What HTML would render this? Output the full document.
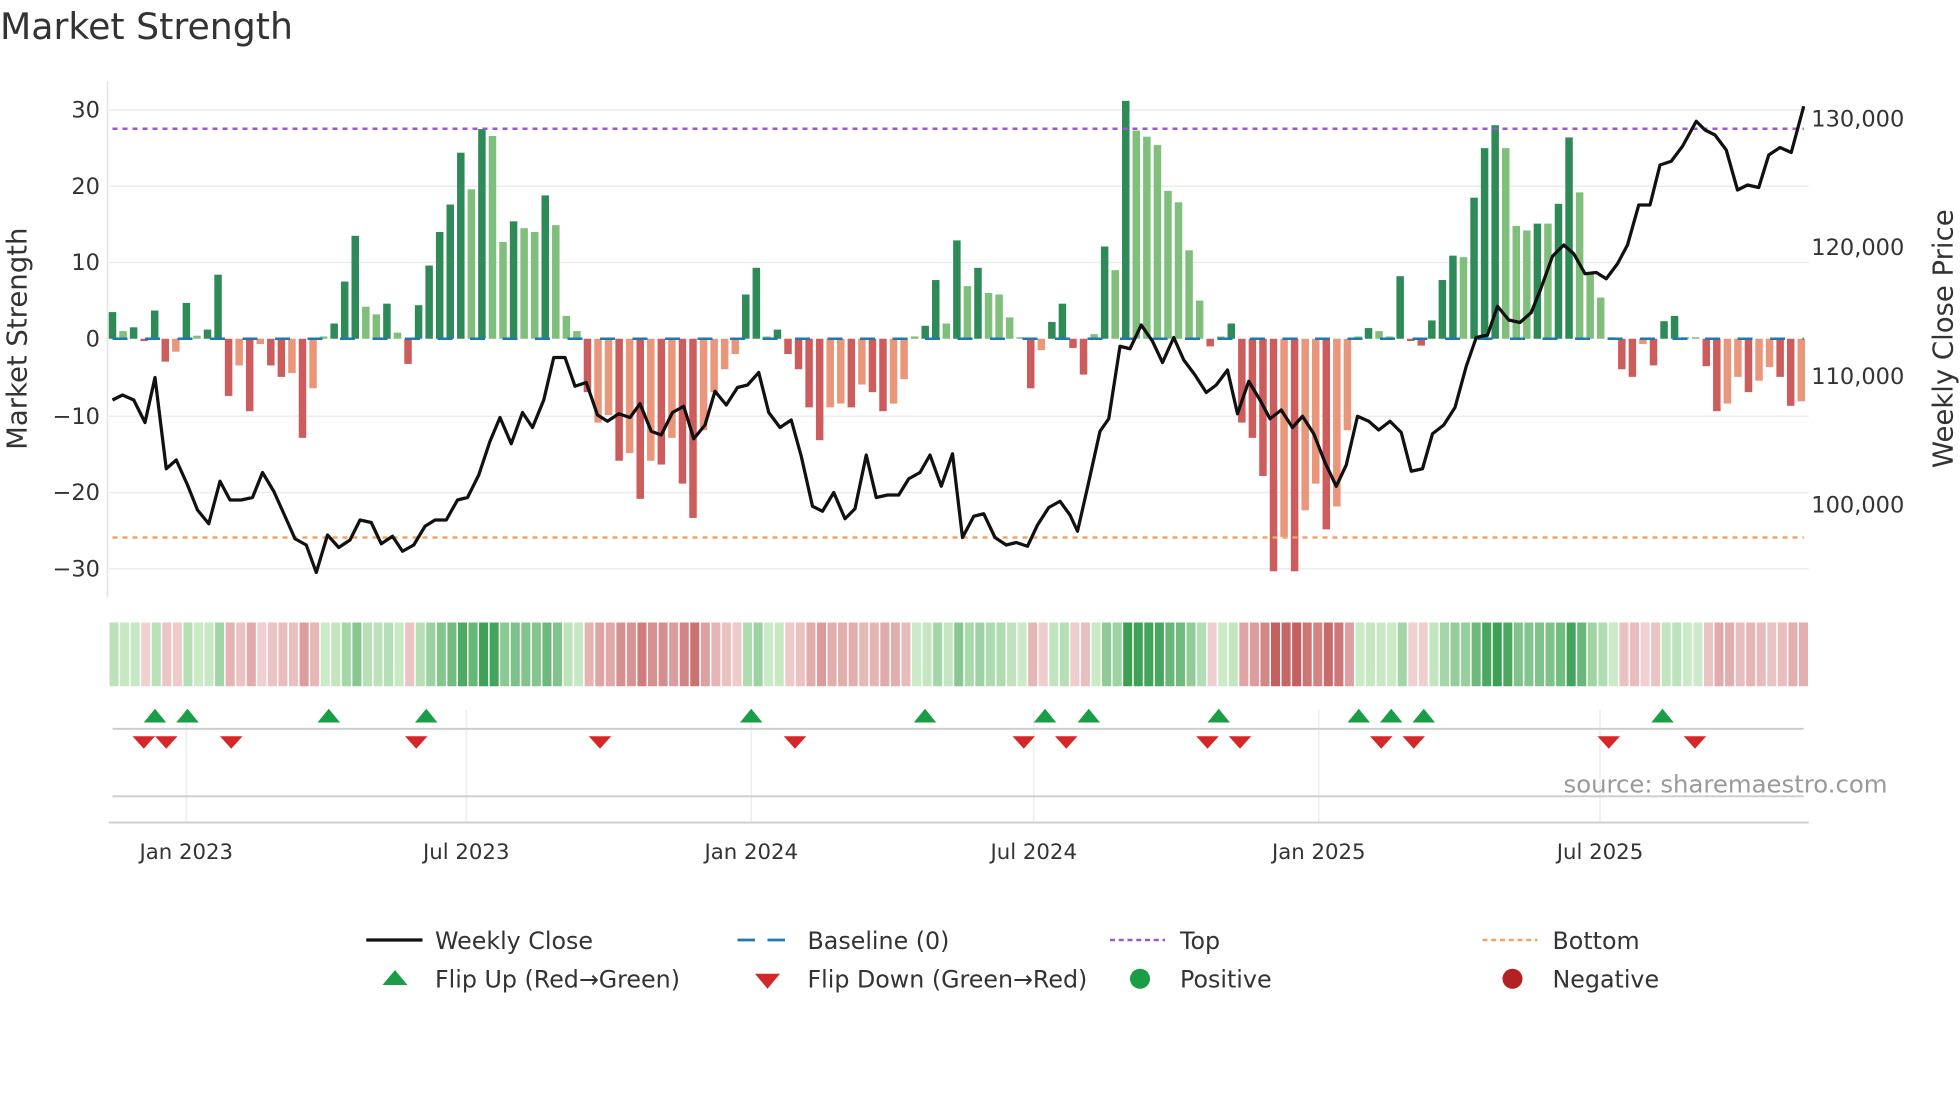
<!DOCTYPE html>
<html><head><meta charset="utf-8"><style>
html,body{margin:0;padding:0;background:#fff;}
svg{display:block;font-family:"DejaVu Sans","Liberation Sans",sans-serif;}
</style></head><body>
<svg id="s" width="1960" height="1102" viewBox="0 0 1568 881.6" xmlns="http://www.w3.org/2000/svg">
<rect width="1568" height="882" fill="#fff"/>
<text x="0" y="31" font-size="29" fill="#333">Market Strength</text>
<g id="grid"></g>
<g id="bars"></g>
<g id="strip"></g>
<g id="marks"></g>
<line x1="90" y1="103" x2="1443" y2="103" stroke="#9b59d0" stroke-width="2" stroke-dasharray="4,4"/>
<line x1="90" y1="430" x2="1443" y2="430" stroke="#f4a261" stroke-width="2" stroke-dasharray="4,4"/>
<polyline id="price" fill="none" stroke="#111" stroke-width="2.6" stroke-linejoin="round"/>
<g font-size="18" fill="#333" text-anchor="end">
<text x="80" y="94">30</text><text x="80" y="155">20</text><text x="80" y="216">10</text><text x="80" y="277">0</text>
<text x="80" y="339">−10</text><text x="80" y="400">−20</text><text x="80" y="461">−30</text>
</g>
<g font-size="18" fill="#333">
<text x="1449" y="101">130,000</text><text x="1449" y="204">120,000</text><text x="1449" y="307">110,000</text><text x="1449" y="410">100,000</text>
</g>
<text transform="translate(21,271) rotate(-90)" font-size="22" fill="#333" text-anchor="middle">Market Strength</text>
<text transform="translate(1562,271) rotate(-90)" font-size="22" fill="#333" text-anchor="middle">Weekly Close Price</text>
<line x1="90" y1="583" x2="1443" y2="583" stroke="#ccc" stroke-width="1.5"/>
<line x1="90" y1="637" x2="1443" y2="637" stroke="#ccc" stroke-width="1.5"/>
<line x1="87" y1="658" x2="1447" y2="658" stroke="#ccc" stroke-width="1.5"/>
<text x="1510" y="634" font-size="19.5" fill="#999" text-anchor="end">source: sharemaestro.com</text>
<g font-size="17" fill="#333" text-anchor="middle">
<text x="149" y="687">Jan 2023</text><text x="373" y="687">Jul 2023</text><text x="601" y="687">Jan 2024</text>
<text x="827" y="687">Jul 2024</text><text x="1055" y="687">Jan 2025</text><text x="1280" y="687">Jul 2025</text>
</g>
<g font-size="19" fill="#333">
<line x1="293" y1="752" x2="338" y2="752" stroke="#111" stroke-width="2.6"/><text x="348" y="759">Weekly Close</text>
<line x1="590" y1="752" x2="634" y2="752" stroke="#1f77b4" stroke-width="2.2" stroke-dasharray="14,10"/><text x="646" y="759">Baseline (0)</text>
<line x1="888" y1="752" x2="932" y2="752" stroke="#9b59d0" stroke-width="2" stroke-dasharray="4,3"/><text x="944" y="759">Top</text>
<line x1="1186" y1="752" x2="1230" y2="752" stroke="#f4a261" stroke-width="2" stroke-dasharray="4,3"/><text x="1242" y="759">Bottom</text>
<polygon points="306,788 326,788 316,776" fill="#1a9e45"/><text x="348" y="790">Flip Up (Red→Green)</text>
<polygon points="604,779 624,779 614,791" fill="#d62728"/><text x="646" y="790">Flip Down (Green→Red)</text>
<circle cx="912" cy="783" r="8" fill="#1a9e45"/><text x="944" y="790">Positive</text>
<circle cx="1210" cy="783" r="8" fill="#b22222"/><text x="1242" y="790">Negative</text>
</g>
</svg>
<script>
var NS="http://www.w3.org/2000/svg";
function el(p,t,a){var e=document.createElementNS(NS,t);for(var k in a)e.setAttribute(k,a[k]);p.appendChild(e);return e;}
var D="3.5d 1l 1.5d -0.3r 3.7d -3r -1.7s 4.7d 0.4l 1.2d 8.4d -7.5r -3.5s -9.5r -0.7s -3.5r -5r -4.5s -13r -6.5s 0.3l 2d 7.5d 13.5d 4.2l 3.2l 4.6d 0.8l -3.3r 4.4d 9.6d 14d 17.6d 24.4d 19.6l 27.5d 26.6l 12.7l 15.4d 14.5l 14l 18.8d 14.9l 3l 1l -7r -11s -10s -16r -15s -21r -16s -16.5r -13s -19r -23.5r -12s -7s -4s -2s 5.8d 9.3d 0.3l 1.2d -2r -4r -9r -13.3r -9s -8.5s -9r -6s -7r -9.5r -8.5s -5.3s 0.3l 1.7d 7.7d 2l 12.9d 6.9l 9.3d 6l 5.8l 2.8l 0.2l -6.5r -1.5s 2.2d 4.6d -1.2r -4.7r 0.6l 12.1d 9l 31.2d 27.3l 26.5l 25.4l 19.4l 17.9l 11.6l 5l -1r 0.3l 2d -11r -13r -18r -30.5r -26s -30.5r -22.5s -19s -25r -22s -12s 0.3l 1.4d 1l 0.3l 8.2d -0.3r -0.9r 2.4d 7.7d 10.9d 10.7l 18.5d 25d 28d 25l 14.8l 14.2l 15.1d 15.1l 17.7d 26.4d 19.2l 8.7l 5.4l 0.2l -4r -5r -0.7s -3.5r 2.3d 3d 0.2l 0.2l -3.6r -9.5r -8.5s -5s -7r -5.5s -3.7s -5r -8.8r -8.2s".split(" ");
var n=D.length,x0=90,x1=1441,st=(x1-x0)/(n-1);
var g=document.getElementById("grid");
[88,149,210,333,394,455].forEach(function(y){el(g,"line",{x1:87,y1:y,x2:1447,y2:y,stroke:"#ececec","stroke-width":1.2});});
el(g,"line",{x1:86,y1:65,x2:86,y2:478,stroke:"#e4e4e4","stroke-width":1.2});
[149,373,601,827,1055,1280].forEach(function(x){el(g,"line",{x1:x,y1:568,x2:x,y2:658,stroke:"#eee","stroke-width":1.2});});
var b=document.getElementById("bars"),s=document.getElementById("strip");
var C={d:"#2e8b57",l:"#7fbf7b",r:"#cd5c5c",s:"#e9967a"};
function mix(a,c,t){return "rgb("+[0,1,2].map(function(i){return Math.round(a[i]+(c[i]-a[i])*t);}).join(",")+")";}
var sw=1360/n;
D.forEach(function(v,i){var val=parseFloat(v),c=v.slice(-1),x=x0+i*st;
 var h=val*6.1,y=val>=0?271-h:271;
 el(b,"rect",{x:x-3,y:y,width:6,height:Math.max(Math.abs(h),0.8),fill:C[c]});
 var t=Math.min(Math.abs(val)/28,1),col;
 if(val>=0)col=mix([205,235,200],[60,160,85],t);else col=mix([240,210,210],[195,95,95],t);
 el(s,"rect",{x:87+i*sw+0.6,y:498,width:sw-1.2,height:51,fill:col});
});
el(b,"line",{x1:90,y1:271,x2:1443,y2:271,stroke:"#1f77b4","stroke-width":2,"stroke-dasharray":"12,14"});
var P=[[90,320],[98,316],[107,320],[116,338],[124,302],[133,375],[141,368],[150,388],[158,408],[167,419],[176,385],[184,400],[193,400],[202,398],[210,378],[219,393],[228,413],[236,431],[245,436],[253,458],[262,428],[271,438],[280,432],[288,416],[297,418],[305,435],[314,429],[322,441],[331,436],[340,421],[348,416],[357,416],[366,400],[374,398],[383,380],[392,353],[400,334],[409,355],[418,330],[426,342],[435,320],[443,286],[452,286],[460,309],[469,306],[478,332],[486,337],[495,331],[504,334],[512,323],[521,345],[529,348],[538,330],[547,325],[555,351],[564,340],[572,313],[581,324],[590,310],[598,308],[607,298],[615,330],[624,342],[633,336],[641,365],[650,405],[658,409],[667,394],[676,415],[684,407],[693,364],[701,398],[710,396],[719,396],[727,383],[736,378],[744,364],[753,389],[762,363],[770,430],[779,413],[787,411],[796,430],[805,436],[813,434],[822,437],[830,420],[839,406],[848,401],[856,412],[862,425],[870,390],[880,345],[887,335],[896,277],[904,279],[913,260],[922,273],[930,290],[939,270],[947,288],[956,300],[965,314],[973,308],[982,296],[990,331],[999,305],[1008,320],[1016,335],[1025,328],[1034,342],[1042,333],[1051,347],[1060,370],[1069,389],[1077,372],[1086,333],[1095,337],[1103,344],[1112,337],[1121,346],[1129,377],[1138,375],[1146,347],[1155,340],[1164,326],[1173,293],[1181,270],[1190,268],[1198,245],[1207,256],[1216,258],[1225,250],[1233,230],[1242,205],[1251,196],[1259,203],[1268,219],[1277,218],[1285,223],[1294,211],[1302,196],[1311,164],[1320,164],[1328,132],[1337,129],[1346,117],[1357,97],[1364,104],[1372,108],[1381,120],[1390,152],[1398,148],[1407,150],[1415,124],[1424,118],[1433,122],[1443,85]];
document.getElementById("price").setAttribute("points",P.map(function(p){return p.join(",");}).join(" "));
var m=document.getElementById("marks");
[124,150,263,341,601,740,836,871,975,1087,1113,1139,1330].forEach(function(x){el(m,"polygon",{points:(x-9)+",578 "+(x+9)+",578 "+x+",567",fill:"#1a9e45"});});
[115,133,185,333,480,636,819,853,966,992,1105,1131,1287,1356].forEach(function(x){el(m,"polygon",{points:(x-9)+",589 "+(x+9)+",589 "+x+",599",fill:"#d62728"});});
</script>
</body></html>
